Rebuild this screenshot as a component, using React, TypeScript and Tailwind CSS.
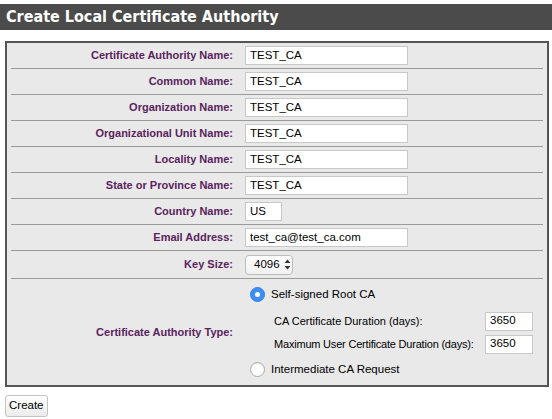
import React from "react";

const labelCls =
  "w-[222px] shrink-0 text-right text-[11px] font-bold text-[#5a235e] leading-none";
const inputCls =
  "h-[19px] bg-white border border-[#c8c8c8] px-[4px] text-[11.5px] text-black leading-none flex items-center";

function Row({ label, children, h = "h-[26px]" }: { label: string; children: React.ReactNode; h?: string }) {
  return (
    <div className={`flex items-center ${h} border-b border-[#9a9a9a]`}>
      <div className={labelCls}>{label}</div>
      <div className="ml-[12px] flex items-center">{children}</div>
    </div>
  );
}

function TextBox({ value, w = "w-[163px]" }: { value: string; w?: string }) {
  return <div className={`${inputCls} ${w}`}>{value}</div>;
}

function Radio({ checked }: { checked: boolean }) {
  return checked ? (
    <div className="w-[15px] h-[15px] rounded-full bg-[#3d8ff7] border border-[#2f7fe6] flex items-center justify-center">
      <div className="w-[5px] h-[5px] rounded-full bg-white" />
    </div>
  ) : (
    <div className="w-[15px] h-[15px] rounded-full bg-white border border-[#a8a8a8] shadow-[inset_0_1px_1px_rgba(0,0,0,0.08)]" />
  );
}

export default function App() {
  return (
    <div
      className="w-[552px] h-[419px] bg-white relative"
      style={{ fontFamily: '"Liberation Sans", Arial, sans-serif' }}
    >
      <div className="pt-[4px]">
        <div className="h-[26px] bg-[#4b4b4b] flex items-center pl-[6px]">
          <span
            className="text-white font-bold text-[16px] leading-none"
            style={{ fontFamily: '"DejaVu Sans Condensed", "DejaVu Sans", sans-serif' }}
          >
            Create Local Certificate Authority
          </span>
        </div>
      </div>

      <div className="mt-[11px] ml-[5px] w-[544px] border-2 border-[#555555] bg-[#e9e9e9] px-[4px]">
        <Row label="Certificate Authority Name:">
          <TextBox value="TEST_CA" />
        </Row>
        <Row label="Common Name:">
          <TextBox value="TEST_CA" />
        </Row>
        <Row label="Organization Name:">
          <TextBox value="TEST_CA" />
        </Row>
        <Row label="Organizational Unit Name:">
          <TextBox value="TEST_CA" />
        </Row>
        <Row label="Locality Name:">
          <TextBox value="TEST_CA" />
        </Row>
        <Row label="State or Province Name:">
          <TextBox value="TEST_CA" />
        </Row>
        <Row label="Country Name:">
          <TextBox value="US" w="w-[37px]" />
        </Row>
        <Row label="Email Address:">
          <TextBox value="test_ca@test_ca.com" />
        </Row>
        <Row label="Key Size:" h="h-[28px]">
          <div className="w-[48px] h-[20px] rounded-[4px] border border-[#bdbdbd] bg-gradient-to-b from-white to-[#f1f1f1] flex items-center pl-[8px] text-[11.5px] text-black leading-none">
            <span>4096</span>
            <svg width="7" height="11" viewBox="0 0 7 11" className="ml-[4px]">
              <path d="M3.5 0.5 L6.5 4 L0.5 4 Z" fill="#333" />
              <path d="M3.5 10.5 L6.5 7 L0.5 7 Z" fill="#333" />
            </svg>
          </div>
        </Row>
        <div className="flex items-center h-[106px]">
          <div className={labelCls}>Certificate Authority Type:</div>
          <div className="ml-[17px] flex flex-col text-[11.5px] text-black leading-none whitespace-nowrap">
            <div className="flex items-center h-[18px]">
              <Radio checked />
              <span className="ml-[6px]">Self-signed Root CA</span>
            </div>
            <div className="ml-[24px] mt-[6px] flex flex-col text-[11px]">
              <div className="flex items-center h-[23px]">
                <span className="w-[211px]">CA Certificate Duration (days):</span>
                <TextBox value="3650" w="w-[48px]" />
              </div>
              <div className="flex items-center h-[23px]">
                <span className="w-[211px] tracking-[-0.2px]">Maximum User Certificate Duration (days):</span>
                <TextBox value="3650" w="w-[48px]" />
              </div>
            </div>
            <div className="flex items-center h-[18px] mt-[5px]">
              <Radio checked={false} />
              <span className="ml-[6px]">Intermediate CA Request</span>
            </div>
          </div>
        </div>
      </div>

      <div className="mt-[5px] ml-[5px]">
        <div className="inline-flex items-center h-[22px] px-[3px] border border-[#c3c3c3] rounded-[3px] bg-gradient-to-b from-white to-[#ececec] text-[11.5px] text-black leading-none">
          Create
        </div>
      </div>
    </div>
  );
}
